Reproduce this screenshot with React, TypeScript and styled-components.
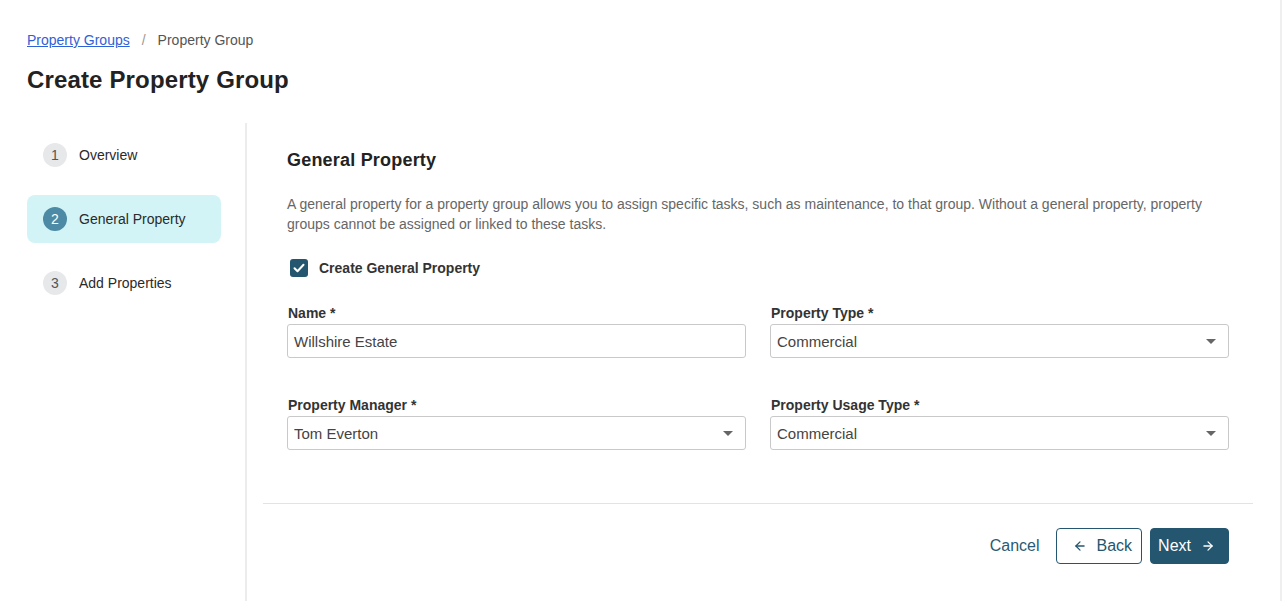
import React from "react";
import styled, { createGlobalStyle } from "styled-components";

const GlobalStyle = createGlobalStyle`
  html, body { margin: 0; padding: 0; background: #ffffff; }
  body { font-family: "Liberation Sans", Arial, sans-serif; color: #222; }
  * { box-sizing: border-box; }
`;

const Page = styled.div`
  width: 1282px;
  height: 601px;
  border-right: 2px solid #efefef;
  display: flex;
  flex-direction: column;
  overflow: hidden;
`;

const Header = styled.header`
  padding: 30px 0 0 27px;
  height: 123px;
`;

const Breadcrumb = styled.nav`
  display: flex;
  align-items: center;
  gap: 12px;
  font-size: 14px;
  line-height: 20px;
  color: #555;
`;

const CrumbLink = styled.a`
  color: #2f62d6;
  text-decoration: underline;
  cursor: pointer;
`;

const Sep = styled.span`
  color: #999;
`;

const Title = styled.h1`
  margin: 14px 0 0;
  font-size: 24px;
  line-height: 32px;
  font-weight: 700;
  color: #222;
  letter-spacing: 0.15px;
`;

const Body = styled.div`
  flex: 1;
  display: flex;
  padding-left: 27px;
`;

const Sidebar = styled.aside`
  width: 220px;
  flex-shrink: 0;
  padding: 8px 24px 0 0;
  display: flex;
  flex-direction: column;
  gap: 16px;
  border-right: 2px solid #ececec;
`;

const Step = styled.div<{ $active?: boolean }>`
  height: 48px;
  display: flex;
  align-items: center;
  gap: 12px;
  padding-left: 16px;
  border-radius: 8px;
  background: ${(p) => (p.$active ? "#d2f4f6" : "transparent")};
  font-size: 14px;
  color: #2a2a2a;
`;

const StepNum = styled.span<{ $active?: boolean }>`
  width: 24px;
  height: 24px;
  border-radius: 50%;
  display: flex;
  align-items: center;
  justify-content: center;
  font-size: 14px;
  background: ${(p) => (p.$active ? "#4c8aa5" : "#e7e8ea")};
  color: ${(p) => (p.$active ? "#ffffff" : "#555")};
`;

const Main = styled.main`
  flex: 1;
  padding: 0 27px 0 16px;
  display: flex;
  flex-direction: column;
`;

const Section = styled.section`
  padding: 25px 24px 53px;
  border-bottom: 1px solid #e3e3e3;
`;

const SectionTitle = styled.h2`
  margin: 0;
  font-size: 18px;
  line-height: 24px;
  font-weight: 700;
  color: #222;
  letter-spacing: 0.2px;
`;

const Description = styled.p`
  margin: 22px 0 0;
  font-size: 14px;
  line-height: 20px;
  color: #666;
`;

const CheckRow = styled.label`
  margin-top: 24px;
  display: flex;
  align-items: center;
  gap: 11px;
  height: 20px;
  padding-left: 3px;
  font-size: 14px;
  font-weight: 700;
  color: #333;
`;

const CheckBox = styled.span`
  width: 18px;
  height: 18px;
  border-radius: 3px;
  background: #24566f;
  display: flex;
  align-items: center;
  justify-content: center;
`;

const Grid = styled.div`
  margin-top: 25px;
  display: grid;
  grid-template-columns: 1fr 1fr;
  column-gap: 24px;
  row-gap: 37px;
`;

const Field = styled.div`
  display: flex;
  flex-direction: column;
  gap: 1px;
`;

const Label = styled.span`
  font-size: 14px;
  line-height: 20px;
  font-weight: 700;
  color: #333;
  padding-left: 1px;
`;

const Control = styled.div`
  height: 34px;
  border: 1px solid #c9c9c9;
  border-radius: 3px;
  display: flex;
  align-items: center;
  justify-content: space-between;
  padding: 0 12px 0 6px;
  font-size: 15px;
  color: #444;
`;

const Caret = styled.span`
  width: 0;
  height: 0;
  border-left: 5px solid transparent;
  border-right: 5px solid transparent;
  border-top: 5px solid #666;
`;

const Footer = styled.div`
  padding: 24px 24px 0;
  display: flex;
  justify-content: flex-end;
  align-items: center;
  gap: 8px;
`;

const TextButton = styled.button`
  background: none;
  border: none;
  font-family: inherit;
  font-size: 16px;
  color: #2b5a73;
  padding: 0;
  margin-right: 8px;
  height: 36px;
`;

const Button = styled.button<{ $primary?: boolean }>`
  height: 36px;
  border-radius: 4px;
  display: flex;
  align-items: center;
  gap: 10px;
  font-family: inherit;
  font-size: 16px;
  border: 1px solid #24566f;
  background: ${(p) => (p.$primary ? "#24566f" : "#fff")};
  color: ${(p) => (p.$primary ? "#fff" : "#24566f")};
  padding: ${(p) => (p.$primary ? "0 13px 0 7px" : "0 9px 0 16px")};
`;

const ArrowLeft = () => (
  <svg width="14" height="14" viewBox="0 0 24 24" fill="none" stroke="currentColor" strokeWidth="2.2" strokeLinecap="round" strokeLinejoin="round">
    <path d="M19 12H5" />
    <path d="M12 19l-7-7 7-7" />
  </svg>
);

const ArrowRight = () => (
  <svg width="14" height="14" viewBox="0 0 24 24" fill="none" stroke="currentColor" strokeWidth="2.2" strokeLinecap="round" strokeLinejoin="round">
    <path d="M5 12h14" />
    <path d="M12 5l7 7-7 7" />
  </svg>
);

const steps = ["Overview", "General Property", "Add Properties"];

export default function App() {
  return (
    <>
      <GlobalStyle />
      <Page>
        <Header>
          <Breadcrumb>
            <CrumbLink>Property Groups</CrumbLink>
            <Sep>/</Sep>
            <span>Property Group</span>
          </Breadcrumb>
          <Title>Create Property Group</Title>
        </Header>
        <Body>
          <Sidebar>
            {steps.map((s, i) => (
              <Step key={s} $active={i === 1}>
                <StepNum $active={i === 1}>{i + 1}</StepNum>
                {s}
              </Step>
            ))}
          </Sidebar>
          <Main>
            <Section>
              <SectionTitle>General Property</SectionTitle>
              <Description>
                A general property for a property group allows you to assign specific tasks, such as maintenance, to that group. Without a general property, property groups cannot be assigned or linked to these tasks.
              </Description>
              <CheckRow>
                <CheckBox>
                  <svg width="12" height="10" viewBox="0 0 12 10" fill="none" stroke="#fff" strokeWidth="2" strokeLinecap="round" strokeLinejoin="round">
                    <path d="M1.5 5.2l3 3L10.5 1.8" />
                  </svg>
                </CheckBox>
                Create General Property
              </CheckRow>
              <Grid>
                <Field>
                  <Label>Name *</Label>
                  <Control>Willshire Estate</Control>
                </Field>
                <Field>
                  <Label>Property Type *</Label>
                  <Control>
                    Commercial
                    <Caret />
                  </Control>
                </Field>
                <Field>
                  <Label>Property Manager *</Label>
                  <Control>
                    Tom Everton
                    <Caret />
                  </Control>
                </Field>
                <Field>
                  <Label>Property Usage Type *</Label>
                  <Control>
                    Commercial
                    <Caret />
                  </Control>
                </Field>
              </Grid>
            </Section>
            <Footer>
              <TextButton>Cancel</TextButton>
              <Button>
                <ArrowLeft />
                Back
              </Button>
              <Button $primary>
                Next
                <ArrowRight />
              </Button>
            </Footer>
          </Main>
        </Body>
      </Page>
    </>
  );
}
